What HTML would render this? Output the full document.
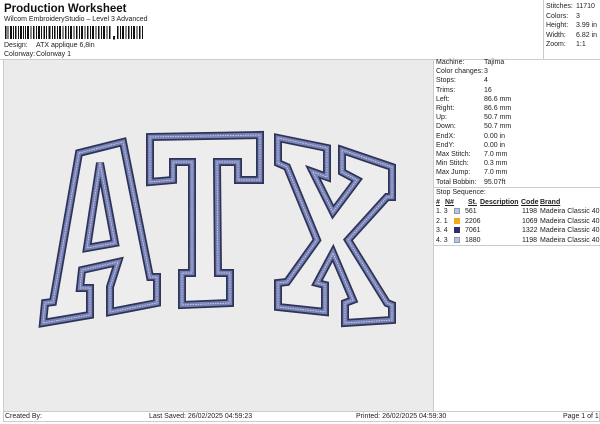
<!DOCTYPE html>
<html><head><meta charset="utf-8"><style>
*{margin:0;padding:0;box-sizing:border-box}
body{width:600px;height:424px;background:#fff;font-family:"Liberation Sans",sans-serif;font-size:7px;color:#222;position:relative;overflow:hidden}
.a{position:absolute;white-space:nowrap;line-height:9px}
</style></head><body>
<div class="a" style="left:4px;top:2px;font-size:11.5px;font-weight:bold;line-height:14px;color:#111">Production Worksheet</div>
<div class="a" style="left:4px;top:15px">Wilcom EmbroideryStudio – Level 3 Advanced</div>
<svg class="a" style="left:4px;top:26px" width="142" height="14">
<g fill="#111">
<rect x="1" y="0" width="1.5" height="13"/><rect x="3.5" y="0" width="1" height="13"/><rect x="6" y="0" width="2" height="13"/><rect x="9" y="0" width="1" height="13"/><rect x="11" y="0" width="1.5" height="13"/><rect x="14" y="0" width="1" height="13"/><rect x="16" y="0" width="2" height="13"/><rect x="19" y="0" width="1" height="13"/><rect x="21" y="0" width="1" height="13"/><rect x="23" y="0" width="2" height="13"/><rect x="26.5" y="0" width="1" height="13"/><rect x="29" y="0" width="1.5" height="13"/><rect x="32" y="0" width="1" height="13"/><rect x="34" y="0" width="2" height="13"/><rect x="37" y="0" width="1" height="13"/><rect x="39.5" y="0" width="1.5" height="13"/><rect x="42" y="0" width="1" height="13"/><rect x="44.5" y="0" width="2" height="13"/><rect x="48" y="0" width="1" height="13"/><rect x="50" y="0" width="1.5" height="13"/><rect x="53" y="0" width="1" height="13"/><rect x="55" y="0" width="2" height="13"/><rect x="58.5" y="0" width="1" height="13"/><rect x="61" y="0" width="1.5" height="13"/><rect x="64" y="0" width="1" height="13"/><rect x="66" y="0" width="2" height="13"/><rect x="69.5" y="0" width="1" height="13"/><rect x="72" y="0" width="1.5" height="13"/><rect x="75" y="0" width="1" height="13"/><rect x="77" y="0" width="2" height="13"/><rect x="80.5" y="0" width="1" height="13"/><rect x="83" y="0" width="1.5" height="13"/><rect x="86" y="0" width="1" height="13"/><rect x="88" y="0" width="2" height="13"/><rect x="91.5" y="0" width="1" height="13"/><rect x="94" y="0" width="1.5" height="13"/><rect x="97" y="0" width="1" height="13"/><rect x="99" y="0" width="2" height="13"/><rect x="102.5" y="0" width="1" height="13"/><rect x="105" y="0" width="1.5" height="13"/>
<rect x="109" y="10" width="2" height="3"/><rect x="109.5" y="12" width="1" height="2"/>
<rect x="113" y="0" width="1.5" height="13"/><rect x="116" y="0" width="1" height="13"/><rect x="118" y="0" width="2" height="13"/><rect x="121.5" y="0" width="1" height="13"/><rect x="124" y="0" width="1.5" height="13"/><rect x="127" y="0" width="1" height="13"/><rect x="129" y="0" width="2" height="13"/><rect x="132.5" y="0" width="1" height="13"/><rect x="135" y="0" width="1.5" height="13"/><rect x="138" y="0" width="1" height="13"/>
</g></svg>
<div class="a" style="left:4px;top:41px">Design:</div><div class="a" style="left:36px;top:41px">ATX applique 6,8in</div>
<div class="a" style="left:4px;top:50px">Colorway:</div><div class="a" style="left:36px;top:50px">Colorway 1</div>
<div class="a" style="left:0;top:59px;width:600px;border-top:1px solid #ccc"></div>
<div class="a" style="left:543px;top:0;width:1px;height:59px;background:#ccc"></div>
<div class="a" style="left:546px;top:2px;line-height:9.6px">Stitches:<br>Colors:<br>Height:<br>Width:<br>Zoom:</div>
<div class="a" style="left:576px;top:2px;line-height:9.6px">11710<br>3<br>3.99 in<br>6.82 in<br>1:1</div>
<div class="a" style="left:3px;top:60px;width:430px;height:351px;background:#ebebeb"></div>
<div class="a" style="left:3px;top:59px;width:1px;height:353px;background:#ccc"></div>
<svg class="a" style="left:0;top:0" width="600" height="424">
<defs><g id="L">
<polygon points="79,153 123,142 150,277 157,277 157,303 110,312 110,287 118,262 82,270 80,288 90,288 90,315 43,323 45,303 53,302"/>
<polygon points="100,163 115,243 87,248"/>
<polygon points="150,137 260,135 260,180 238,180 238,162 217,162 218,273 230,273 230,303 182,305 182,273 192,273 192,162 173,162 173,180 150,182"/>
<polygon points="278,138 327,148 327,177 313,172 333,212 357,180 342,172 342,150 392,167 392,197 387,197 348,240 387,303 392,305 392,320 345,323 345,303 353,300 333,253 317,283 325,285 325,312 278,307 278,283 287,282 317,240 287,167 278,163"/>
</g></defs>
<use href="#L" fill="#ededed" stroke="#2e3459" stroke-width="8" stroke-linejoin="miter"/>
<use href="#L" fill="none" stroke="#7882b4" stroke-width="4.5"/>
<use href="#L" fill="none" stroke="#dfe3f2" stroke-width="0.7" stroke-dasharray="1.5 1"/>
</svg>
<div class="a" style="left:436px;top:58px;line-height:9.2px">Machine:<br>Color changes:<br>Stops:<br>Trims:<br>Left:<br>Right:<br>Up:<br>Down:<br>EndX:<br>EndY:<br>Max Stitch:<br>Min Stitch:<br>Max Jump:<br>Total Bobbin:</div>
<div class="a" style="left:484px;top:58px;line-height:9.2px">Tajima<br>3<br>4<br>16<br>86.6 mm<br>86.6 mm<br>50.7 mm<br>50.7 mm<br>0.00 in<br>0.00 in<br>7.0 mm<br>0.3 mm<br>7.0 mm<br>95.07ft</div>
<div class="a" style="left:433px;top:187px;width:167px;border-top:1px solid #ccc"></div>
<div class="a" style="left:436px;top:188px">Stop Sequence:</div>
<div class="a" style="left:436px;top:198px;font-weight:bold;text-decoration:underline">#</div>
<div class="a" style="left:445px;top:198px;font-weight:bold;text-decoration:underline">N#</div>
<div class="a" style="left:468px;top:198px;font-weight:bold;text-decoration:underline">St.</div>
<div class="a" style="left:480px;top:198px;font-weight:bold;text-decoration:underline">Description</div>
<div class="a" style="left:521px;top:198px;font-weight:bold;text-decoration:underline">Code</div>
<div class="a" style="left:540px;top:198px;font-weight:bold;text-decoration:underline">Brand</div>
<div class="a" style="left:436px;top:207px;line-height:9.5px">1. 3<br>2. 1<br>3. 4<br>4. 3</div>
<div class="a" style="left:454px;top:208px;width:6px;height:6px;background:#b6c6dc;border:1px solid #8a9ab0"></div>
<div class="a" style="left:454px;top:218px;width:6px;height:6px;background:#f2a91c"></div>
<div class="a" style="left:454px;top:227px;width:6px;height:6px;background:#2c2f6e"></div>
<div class="a" style="left:454px;top:237px;width:6px;height:6px;background:#b6c6dc;border:1px solid #8a9ab0"></div>
<div class="a" style="left:465px;top:207px;line-height:9.5px">561<br>2206<br>7061<br>1880</div>
<div class="a" style="left:522px;top:207px;line-height:9.5px">1198<br>1069<br>1322<br>1198</div>
<div class="a" style="left:540px;top:207px;line-height:9.5px">Madeira Classic 40<br>Madeira Classic 40<br>Madeira Classic 40<br>Madeira Classic 40</div>
<div class="a" style="left:433px;top:245px;width:167px;border-top:1px solid #ccc"></div>
<div class="a" style="left:433px;top:59px;width:1px;height:353px;background:#ccc"></div>
<div class="a" style="left:3px;top:411px;width:597px;height:11px;border:1px solid #ccc"></div>
<div class="a" style="left:5px;top:412px">Created By:</div>
<div class="a" style="left:149px;top:412px">Last Saved: 26/02/2025 04:59:23</div>
<div class="a" style="left:356px;top:412px">Printed: 26/02/2025 04:59:30</div>
<div class="a" style="left:563px;top:412px">Page 1 of 1</div>
</body></html>
